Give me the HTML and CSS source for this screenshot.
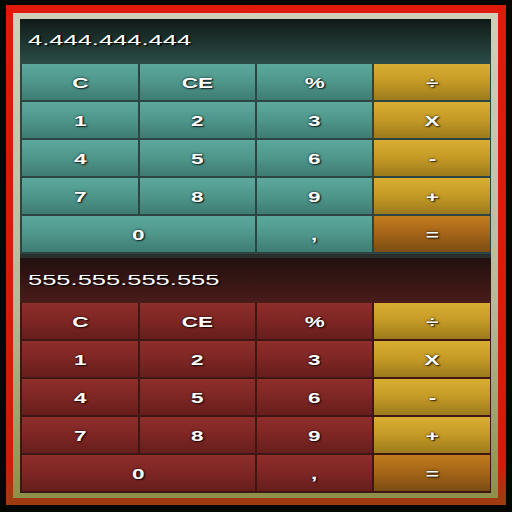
FILE: index.html
```html
<!DOCTYPE html>
<html>
<head>
<meta charset="utf-8">
<link rel="stylesheet" href="styles.css">
</head>
<body>
<div class="red">
  <div class="bevel">
    <div class="app">
      <div class="calc teal">
        <div class="display"><span>4.444.444.444</span></div>
        <div class="keys">
          <div class="key"><span>C</span></div><div class="key"><span>CE</span></div><div class="key"><span>%</span></div><div class="key op"><span>÷</span></div>
          <div class="key"><span>1</span></div><div class="key"><span>2</span></div><div class="key"><span>3</span></div><div class="key op"><span>X</span></div>
          <div class="key"><span>4</span></div><div class="key"><span>5</span></div><div class="key"><span>6</span></div><div class="key op"><span>-</span></div>
          <div class="key"><span>7</span></div><div class="key"><span>8</span></div><div class="key"><span>9</span></div><div class="key op"><span>+</span></div>
          <div class="key wide"><span>0</span></div><div class="key"><span>,</span></div><div class="key eq"><span>=</span></div>
        </div>
      </div>
      <div class="calc maroon">
        <div class="display"><span>555.555.555.555</span></div>
        <div class="keys">
          <div class="key"><span>C</span></div><div class="key"><span>CE</span></div><div class="key"><span>%</span></div><div class="key op"><span>÷</span></div>
          <div class="key"><span>1</span></div><div class="key"><span>2</span></div><div class="key"><span>3</span></div><div class="key op"><span>X</span></div>
          <div class="key"><span>4</span></div><div class="key"><span>5</span></div><div class="key"><span>6</span></div><div class="key op"><span>-</span></div>
          <div class="key"><span>7</span></div><div class="key"><span>8</span></div><div class="key"><span>9</span></div><div class="key op"><span>+</span></div>
          <div class="key wide"><span>0</span></div><div class="key"><span>,</span></div><div class="key eq"><span>=</span></div>
        </div>
      </div>
    </div>
  </div>
</div>
</body>
</html>
```
FILE: styles.css
```css
html, body {
  margin: 0;
  padding: 0;
  background: #050800;
  width: 512px;
  height: 512px;
  overflow: hidden;
}
.red {
  margin: 5px 0 0 6px;
  width: 500px;
  height: 500px;
  box-sizing: border-box;
  padding: 8px 8px 7px 7px;
  background: linear-gradient(180deg, #e01a0a 0%, #d01c0a 92%, #a03a10 98%);
}
.bevel {
  height: 100%;
  box-sizing: border-box;
  padding: 6px 7px 5px 7px;
  background: linear-gradient(180deg, #d0d0b8 0%, #b8b898 60%, #8c9048 100%);
}
.app {
  height: 100%;
  background: #2a2e2c;
  display: flex;
  flex-direction: column;
  gap: 4px;
  font-family: "Liberation Sans", Arial, sans-serif;
  color: #fff;
}
.calc {
  display: flex;
  flex-direction: column;
}
.display {
  height: 45px;
  box-sizing: border-box;
  padding: 0 8px 5px 8px;
  display: flex;
  align-items: center;
  font-size: 15px;
  text-shadow: 1px 1px 1px #000;
}
.maroon .display { padding-bottom: 3px; }
.display span {
  display: inline-block;
  transform: scaleX(1.7);
  transform-origin: left center;
}
.teal .display {
  background: linear-gradient(180deg, #101a18 0%, #1e3430 50%, #2c4c47 100%);
}
.maroon .display {
  background: linear-gradient(180deg, #231010 0%, #351614 50%, #4a1c1a 100%);
}
.keys {
  display: grid;
  grid-template-columns: 116px 115px 115px 116px;
  grid-auto-rows: 36px;
  gap: 2px;
  padding: 0 2px 2px 2px;
}
.teal .keys { background: #2c4442; }
.maroon .keys { background: #3e1614; }
.key {
  display: flex;
  align-items: center;
  justify-content: center;
  font-weight: bold;
  font-size: 15px;
  text-shadow: 0 0 2px rgba(0,0,0,0.9), 1px 1px 1px rgba(0,0,0,0.6);
}
.key span {
  display: inline-block;
  transform: scaleX(1.5);
}
.wide { grid-column: span 2; }
.teal .key {
  background: linear-gradient(180deg, #5ca89c 0%, #4f968b 50%, #3e7c72 100%);
}
.maroon .key {
  background: linear-gradient(180deg, #8e2e2a 0%, #7e2624 50%, #661e1c 100%);
}
.calc .key.op {
  background: linear-gradient(180deg, #d8ae32 0%, #c49a26 50%, #9c7a1c 100%);
}
.calc .key.eq {
  background: linear-gradient(180deg, #c27c1e 0%, #a46418 50%, #7a4c12 100%);
}
```
